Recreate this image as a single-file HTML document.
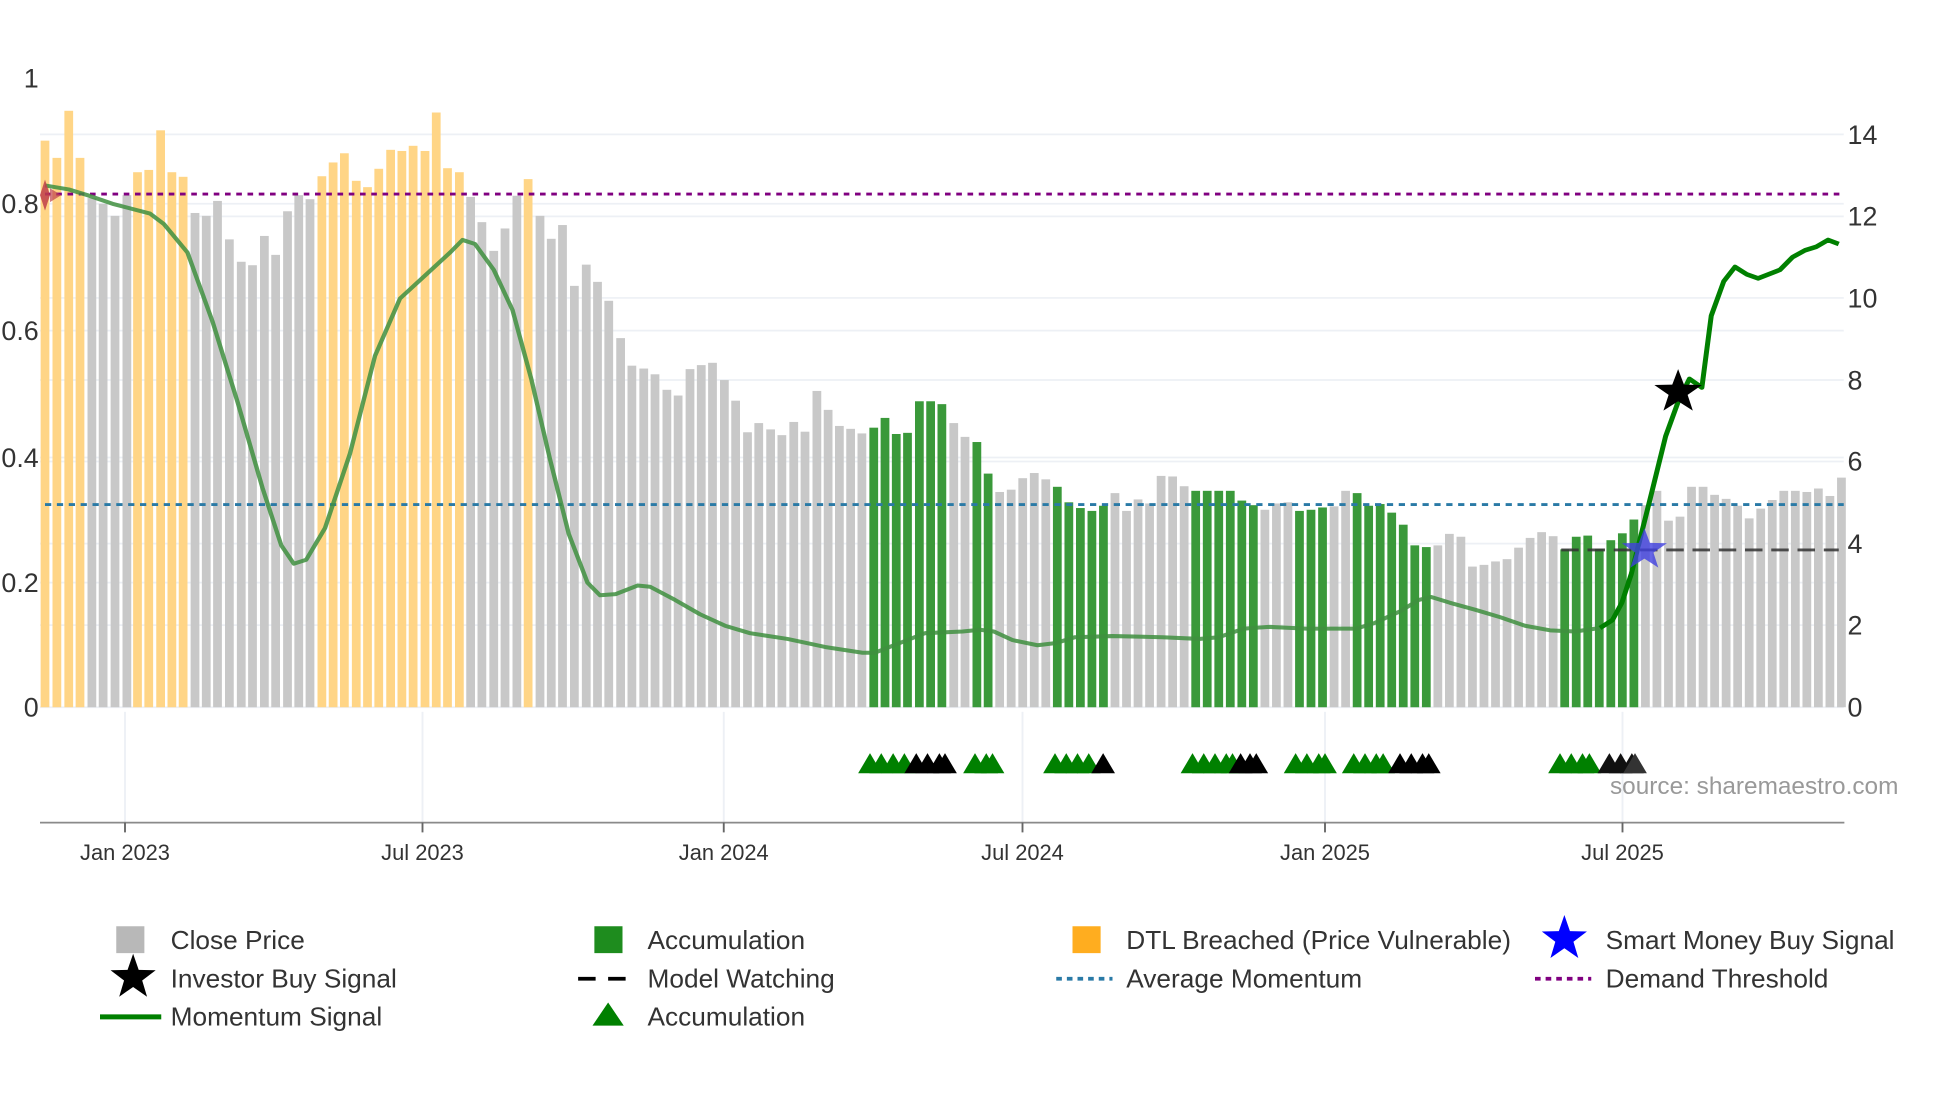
<!DOCTYPE html>
<html><head><meta charset="utf-8"><style>
html,body{margin:0;padding:0;background:#fff;width:1960px;height:1102px;overflow:hidden}
svg{display:block}
text{font-family:"Liberation Sans",sans-serif}
</style></head><body>
<svg id="s" width="1960" height="1102" viewBox="0 0 3136 1763.2" preserveAspectRatio="none" xmlns="http://www.w3.org/2000/svg">
<g transform="scale(1,0.9185)">
<g id="grid" stroke="#edf0f5" stroke-width="3">
<line x1="64" x2="2950" y1="234" y2="234"/><line x1="64" x2="2950" y1="377" y2="377"/><line x1="64" x2="2950" y1="519" y2="519"/><line x1="64" x2="2950" y1="662" y2="662"/><line x1="64" x2="2950" y1="804" y2="804"/><line x1="64" x2="2950" y1="947" y2="947"/><line x1="64" x2="2950" y1="1089" y2="1089"/>
<line x1="64" x2="2950" y1="355" y2="355"/><line x1="64" x2="2950" y1="576" y2="576"/><line x1="64" x2="2950" y1="797" y2="797"/><line x1="64" x2="2950" y1="1015" y2="1015"/><line x1="64" x2="2950" y1="1232" y2="1232"/>
<line x1="200" x2="200" y1="1240" y2="1433"/><line x1="676" x2="676" y1="1240" y2="1433"/><line x1="1158" x2="1158" y1="1240" y2="1433"/><line x1="1636" x2="1636" y1="1240" y2="1433"/><line x1="2120" x2="2120" y1="1240" y2="1433"/><line x1="2596" x2="2596" y1="1240" y2="1433"/>
</g>
<g id="bars"></g>
<line x1="72" x2="2950" y1="879" y2="879" stroke="#2a7aa6" stroke-width="5" stroke-dasharray="10 9"/>
<line x1="72" x2="2950" y1="338" y2="338" stroke="#800080" stroke-width="5" stroke-dasharray="9 9"/>
<line x1="2498" x2="2942" y1="958" y2="958" stroke="#333" stroke-width="5" stroke-dasharray="28 14" opacity="0.85"/>
<polyline fill="none" stroke="#3f8f3f" stroke-opacity="0.85" stroke-width="7" stroke-linejoin="round" points="72,323 110,330 140,340 180,355 240,372 262,390 300,440 340,560 380,700 420,850 450,950 470,982 490,975 520,920 560,790 600,620 640,520 680,480 720,440 740,418 760,425 790,470 820,540 850,660 880,800 910,930 940,1015 960,1037 985,1035 1020,1020 1040,1022 1080,1045 1120,1070 1160,1090 1200,1103 1260,1113 1320,1127 1380,1137 1400,1137 1440,1120 1480,1103 1540,1100 1568,1097 1590,1100 1620,1115 1660,1124 1690,1120 1720,1110 1780,1108 1860,1110 1920,1113 1950,1110 1990,1095 2030,1092 2090,1095 2170,1095 2200,1085 2240,1065 2270,1045 2290,1040 2320,1050 2360,1062 2400,1075 2440,1090 2480,1098 2520,1100 2560,1094 2580,1080"/>
<polyline fill="none" stroke="#008000" stroke-width="8" stroke-linejoin="round" points="2560,1094 2580,1080 2595,1050 2610,1000 2640,870 2665,760 2685,700 2703,660 2723,675 2738,550 2758,490 2776,465 2795,478 2813,485 2848,470 2868,448 2888,436 2906,430 2925,418 2942,425"/>
<polygon points="72,313 80,340 72,367 64,340" fill="#c0404a" opacity="0.85"/>
<polygon points="80,328 98,340 80,352" fill="#c0404a" opacity="0.7"/>
<g id="tris"></g>
<g id="stars"></g>
<line x1="64" x2="2951" y1="1433" y2="1433" stroke="#8a8a8a" stroke-width="3"/>
<g stroke="#666" stroke-width="3"><line x1="200" x2="200" y1="1433" y2="1450"/><line x1="676" x2="676" y1="1433" y2="1450"/><line x1="1158" x2="1158" y1="1433" y2="1450"/><line x1="1636" x2="1636" y1="1433" y2="1450"/><line x1="2120" x2="2120" y1="1433" y2="1450"/><line x1="2596" x2="2596" y1="1433" y2="1450"/></g>
</g>
<g id="lstars"></g>
<g font-size="35" fill="#333" text-anchor="middle">
<text x="200" y="1376">Jan 2023</text><text x="676" y="1376">Jul 2023</text><text x="1158" y="1376">Jan 2024</text><text x="1636" y="1376">Jul 2024</text><text x="2120" y="1376">Jan 2025</text><text x="2596" y="1376">Jul 2025</text>
</g>
<g font-size="43" fill="#333" text-anchor="end">
<text x="62" y="140">1</text><text x="62" y="341">0.8</text><text x="62" y="544">0.6</text><text x="62" y="747">0.4</text><text x="62" y="947">0.2</text><text x="62" y="1146">0</text>
</g>
<g font-size="43" fill="#333">
<text x="2956" y="230">14</text><text x="2956" y="361">12</text><text x="2956" y="492">10</text><text x="2956" y="623">8</text><text x="2956" y="753">6</text><text x="2956" y="885">4</text><text x="2956" y="1015">2</text><text x="2956" y="1146">0</text>
</g>
<text x="2576" y="1270" font-size="39" fill="#999">source: sharemaestro.com</text>
<g font-size="42" fill="#333" transform="translate(0,-18)">
<rect x="186" y="1500" width="45" height="43" fill="#b8b8b8"/><text x="273" y="1536">Close Price</text>
<rect x="951" y="1500" width="45" height="43" fill="#1e8c1e"/><text x="1036" y="1536">Accumulation</text>
<rect x="1716" y="1500" width="45" height="43" fill="#ffad1f"/><text x="1802" y="1536">DTL Breached (Price Vulnerable)</text>
<text x="2569" y="1536">Smart Money Buy Signal</text>
<text x="273" y="1598">Investor Buy Signal</text>
<line x1="925" x2="1015" y1="1584" y2="1584" stroke="#000" stroke-width="6" stroke-dasharray="28 20"/><text x="1036" y="1598">Model Watching</text>
<line x1="1690" x2="1780" y1="1584" y2="1584" stroke="#2a7aa6" stroke-width="6" stroke-dasharray="9 8"/><text x="1802" y="1598">Average Momentum</text>
<line x1="2456" x2="2546" y1="1584" y2="1584" stroke="#800080" stroke-width="6" stroke-dasharray="9 8"/><text x="2569" y="1598">Demand Threshold</text>
<line x1="160" x2="258" y1="1645" y2="1645" stroke="#008000" stroke-width="8"/><text x="273" y="1659">Momentum Signal</text>
<polygon points="973,1622 998,1659 948,1659" fill="#008000"/><text x="1036" y="1659">Accumulation</text>
</g>
</svg>
<script>
var NS="http://www.w3.org/2000/svg";
function el(p,t,a){var e=document.createElementNS(NS,t);for(var k in a)e.setAttribute(k,a[k]);p.appendChild(e);return e;}
var O="#ffd586",G="#c8c8c8",N="#3a993a";
var b1=[[72,245,O],[91,275,O],[110,193,O],[128,275,O],[147,345,G],[165,355,G],[184,376,G],[203,340,G],[220,300,O],[238,296,O],[257,227,O],[275,300,O],[293,308,O],[312,371,G],[330,376,G],[348,350,G],[367,417,G],[386,456,G],[404,462,G],[423,411,G],[441,444,G],[460,368,G],[478,340,G],[496,347,G],[515,307,O],[533,283,O],[551,267,O],[570,315,O],[588,326,O],[606,294,O],[625,261,O],[643,263,O],[661,254,O],[680,263,O],[698,196,O],[716,293,O],[735,300,O],[753,343,G],[771,387,G],[790,437,G],[808,398,G],[827,341,G],[845,312,O],[864,376,G],[882,416,G],[900,392,G],[919,498,G],[938,461,G],[956,491,G],[974,524,G],[993,589,G],[1011,637,G],[1030,642,G],[1048,652,G],[1067,679,G],[1085,689,G],[1104,643,G],[1122,636,G],[1140,632,G],[1159,662,G],[1177,698,G],[1196,753,G],[1214,737,G],[1233,748,G],[1251,758,G],[1270,735,G],[1288,752,G],[1307,681,G],[1325,714,G],[1343,742,G],[1361,747,G],[1379,755,G],[1398,745,N],[1416,728,N],[1434,756,N],[1452,754,N],[1471,699,N],[1489,699,N],[1507,704,N],[1526,737,G],[1544,761,G],[1563,770,N]];
var t2=[825,857,853,833,824,835,848,875,885,890,881,859,890,870,877,829,830,847,855,855,855,855,872,880,888,877,875,890,888,884,882,855,859,881,878,893,914,950,953,950,930,935,987,984,978,974,954,937,927,934,957,935,933,956,941,929,905,880,855,907,900,848,848,862,869,881,903,886,871,855,855,857,851,864,832];
var c2={};[0,6,7,8,9,10,18,19,20,21,22,23,27,28,29,32,33,34,35,36,37,38,50,51,52,53,54,55,56].forEach(function(i){c2[i]=1});
var bars=document.getElementById("bars");
b1.forEach(function(b){el(bars,"rect",{x:b[0]-7,y:b[1],width:14,height:1232-b[1],fill:b[2]})});
t2.forEach(function(t,i){var x=1568+13+18.45*i;el(bars,"rect",{x:x-7,y:t,width:14,height:1232-t,fill:c2[i]?N:G})});
var tris=document.getElementById("tris");
function tri(x,c){el(tris,"polygon",{points:(x-19)+",1347 "+x+",1312 "+(x+19)+",1347",fill:c})}
[1392,1410,1429,1447].forEach(function(x){tri(x,"#008000")});[1466,1484,1503,1512].forEach(function(x){tri(x,"#000")});
[1560,1578,1588].forEach(function(x){tri(x,"#008000")});
[1688,1706,1724,1742].forEach(function(x){tri(x,"#008000")});[1765].forEach(function(x){tri(x,"#000")});
[1908,1926,1944,1962,1972].forEach(function(x){tri(x,"#008000")});[1985,2000,2010].forEach(function(x){tri(x,"#000")});
[2073,2091,2110,2120].forEach(function(x){tri(x,"#008000")});
[2166,2184,2202,2213].forEach(function(x){tri(x,"#008000")});[2240,2258,2276,2286].forEach(function(x){tri(x,"#000")});
[2496,2514,2532,2543].forEach(function(x){tri(x,"#008000")});[2575,2593,2611].forEach(function(x){tri(x,"#111")});tri(2616,"#333");
function star(p0,cx,cy,R,c,op){var p=[];for(var i=0;i<10;i++){var r=i%2?R*0.4:R,a=-Math.PI/2+i*Math.PI/5;p.push((cx+r*Math.cos(a)).toFixed(1)+","+(cy+r*Math.sin(a)).toFixed(1));}el(p0,"polygon",{points:p.join(" "),fill:c,opacity:op||1});}
var st=document.getElementById("stars"),ls=document.getElementById("lstars");
star(st,2631,958,38,"#4040e0",0.8);
star(st,2685,683,40,"#000");
star(ls,213,1564,38,"#000");
star(ls,2503,1502,38,"#0000ff");
</script>
</body></html>
